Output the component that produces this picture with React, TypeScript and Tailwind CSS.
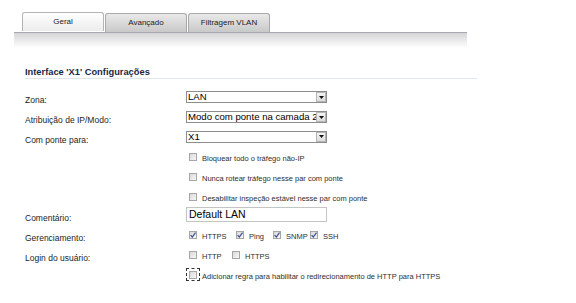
import React from "react";

const font = "font-['Liberation_Sans',Arial,sans-serif]";

function Tab({ label, active }: { label: string; active?: boolean }) {
  return (
    <div
      className={
        "w-[82px] h-[19px] rounded-t-[3px] border border-b-0 flex items-center justify-center text-[8px] text-[#222] " +
        (active
          ? "border-[#b4b4b4] bg-[linear-gradient(to_bottom,#ffffff,#ececec)]"
          : "mt-[1px] h-[18px] border-[#a9a9a9] bg-[linear-gradient(to_bottom,#e9e9e9,#c9c9c9)]")
      }
    >
      {label}
    </div>
  );
}

function Select({ value }: { value: string }) {
  return (
    <div className="w-[141px] h-[12px] border border-[#8d8d8d] bg-white flex items-stretch">
      <div className="flex-1 min-w-0 overflow-hidden whitespace-nowrap pl-[1px] text-[9.6px] leading-[10px] text-black">
        {value}
      </div>
      <div className="w-[10px] bg-[linear-gradient(to_bottom,#f4f4f4,#dcdcdc)] border border-[#b5b5b5] flex items-center justify-center">
        <svg width="5" height="3" viewBox="0 0 5 3">
          <path d="M0 0 H5 L2.5 3 Z" fill="#111" />
        </svg>
      </div>
    </div>
  );
}

function Box({ checked }: { checked?: boolean }) {
  return (
    <span className="shrink-0 w-[8px] h-[8px] border border-[#a6a6a6] bg-[linear-gradient(135deg,#d9d9d9,#f7f7f7)] flex items-center justify-center">
      {checked && (
        <svg width="6" height="6" viewBox="0 0 6 6">
          <path d="M0.6 3.2 L2.3 5 L5.5 0.6" stroke="#3d4f92" strokeWidth="1.2" fill="none" />
        </svg>
      )}
    </span>
  );
}

function Check({ label, checked, w }: { label: string; checked?: boolean; w?: string }) {
  return (
    <span className={"flex items-center " + (w ?? "")}>
      <Box checked={checked} />
      <span className="ml-[5px] pt-[3px] text-[7.5px] leading-[9px] text-[#2e2e2e] whitespace-nowrap">{label}</span>
    </span>
  );
}

function Row({ label, h, children, extra }: { label?: string; h: string; children: React.ReactNode; extra?: string }) {
  return (
    <div className={"flex items-center " + h + " " + (extra ?? "")}>
      <div className="w-[161px] shrink-0 pt-[6px] text-[8.5px] leading-[10px] text-[#1c1c1c]">{label}</div>
      {children}
    </div>
  );
}

export default function App() {
  return (
    <div className={"w-[576px] h-[303px] bg-white overflow-hidden " + font}>
      <div className="pt-[12px] pl-[22px] flex gap-[1px] items-start">
        <Tab label="Geral" active />
        <Tab label="Avançado" />
        <Tab label="Filtragem VLAN" />
      </div>
      <div className="ml-[14px] w-[453px] h-[16px] border-t border-[#a7a7b0] bg-[linear-gradient(to_bottom,#d5d5d7,#ffffff)]" />

      <div className="ml-[25px] w-[452px] mt-[19px] h-[12px] border-b border-[#dfe6ef] text-[9.3px] leading-[11px] font-bold text-[#1b2744]">
        Interface 'X1' Configurações
      </div>

      <div className="pl-[25px] mt-[8px]">
        <Row label="Zona:" h="h-[20px]">
          <Select value="LAN" />
        </Row>
        <Row label="Atribuição de IP/Modo:" h="h-[20px]">
          <Select value="Modo com ponte na camada 2" />
        </Row>
        <Row label="Com ponte para:" h="h-[19px]">
          <Select value="X1" />
        </Row>
        <Row h="h-[20px]" extra="mt-[1px]">
          <div className="pl-[3px]">
            <Check label="Bloquear todo o tráfego não-IP" />
          </div>
        </Row>
        <Row h="h-[20px]">
          <div className="pl-[3px]">
            <Check label="Nunca rotear tráfego nesse par com ponte" />
          </div>
        </Row>
        <Row h="h-[20px]">
          <div className="pl-[3px]">
            <Check label="Desabilitar inspeção estável nesse par com ponte" />
          </div>
        </Row>
        <Row label="Comentário:" h="h-[15px]">
          <div className="w-[141px] h-[15px] border border-[#c4c4c4] bg-white pl-[2px] text-[10.5px] leading-[13px] text-black">
            Default LAN
          </div>
        </Row>
        <Row label="Gerenciamento:" h="h-[21px]" extra="mt-[2px]">
          <div className="pl-[3px] flex items-center">
            <Check label="HTTPS" checked w="w-[47px]" />
            <Check label="Ping" checked w="w-[37px]" />
            <Check label="SNMP" checked w="w-[37px]" />
            <Check label="SSH" checked />
          </div>
        </Row>
        <Row label="Login do usuário:" h="h-[20px]">
          <div className="pl-[3px] flex items-center">
            <Check label="HTTP" w="w-[43px]" />
            <Check label="HTTPS" />
          </div>
        </Row>
        <Row h="h-[19px]">
          <div className="flex items-center">
            <span className="w-[14px] h-[13px] border border-dashed border-[#333] flex items-center justify-center">
              <Box />
            </span>
            <span className="ml-[2px] pt-[3px] text-[7.5px] leading-[9px] text-[#2e2e2e] whitespace-nowrap">
              Adicionar regra para habilitar o redirecionamento de HTTP para HTTPS
            </span>
          </div>
        </Row>
      </div>
    </div>
  );
}
